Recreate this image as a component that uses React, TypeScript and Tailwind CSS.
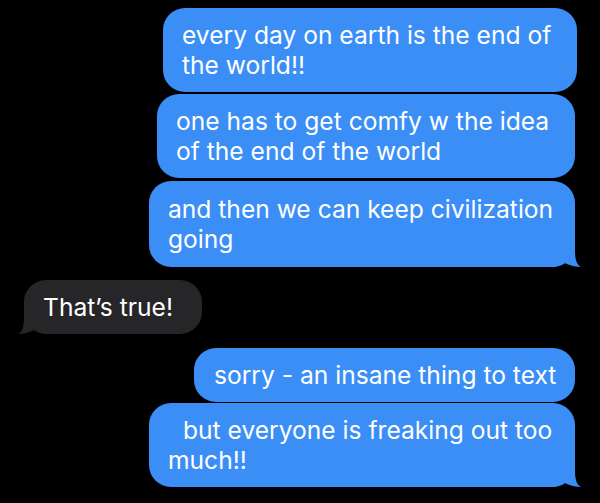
function Tail({ color, left }: { color: string; left?: boolean }) {
  return (
    <svg
      width="29"
      height="22"
      viewBox="0 0 29 22"
      className={left ? "absolute bottom-0 left-[-7px] -scale-x-100" : "absolute bottom-0 right-[-7px]"}
    >
      <path d="M0 22 C5 22 8 18 10 17 C14 19 20 22 28 22 C24 20 22 15 22 6 L22 0 L0 0 Z" fill={color} />
    </svg>
  );
}

export default function App() {
  return (
    <div
      className="w-full h-[503px] bg-black overflow-hidden flex flex-col pt-[8px] text-white text-[24.6px] leading-[30px]"
      style={{ fontFamily: "Inter, 'Open Sans', sans-serif" }}
    >
      {/* sent */}
      <div className="self-end mr-[23px] w-[414px] bg-[#3b8ef6] rounded-[22px] pl-[19px] pr-[12px] py-[12px]">
        every day on earth is the end of the world!!
      </div>
      <div className="self-end mr-[25px] mt-[2px] w-[418px] bg-[#3b8ef6] rounded-[22px] pl-[19px] pr-[12px] py-[12px]">
        one has to get comfy w the idea of the end of the world
      </div>
      <div className="relative self-end mr-[25px] mt-[3px] w-[426px] bg-[#3b8ef6] rounded-[22px] pl-[19px] pr-[12px] py-[13px]">
        and then we can keep civilization going
        <Tail color="#3b8ef6" />
      </div>

      {/* received */}
      <div className="relative self-start ml-[24px] mt-[13px] w-[178px] bg-[#262629] rounded-[22px] pl-[19px] pr-[10px] py-[12px] whitespace-nowrap">
        That’s true!
        <Tail color="#262629" left />
      </div>

      {/* sent */}
      <div className="self-end mr-[25px] mt-[14px] w-[381px] bg-[#3b8ef6] rounded-[22px] pl-[20px] pr-[10px] py-[12px] whitespace-nowrap">
        sorry - an insane thing to text
      </div>
      <div className="relative self-end mr-[25px] mt-[1px] w-[426px] bg-[#3b8ef6] rounded-[22px] pl-[19px] pr-[12px] py-[12px] indent-[15px]">
        but everyone is freaking out too much!!
        <Tail color="#3b8ef6" />
      </div>
    </div>
  );
}
